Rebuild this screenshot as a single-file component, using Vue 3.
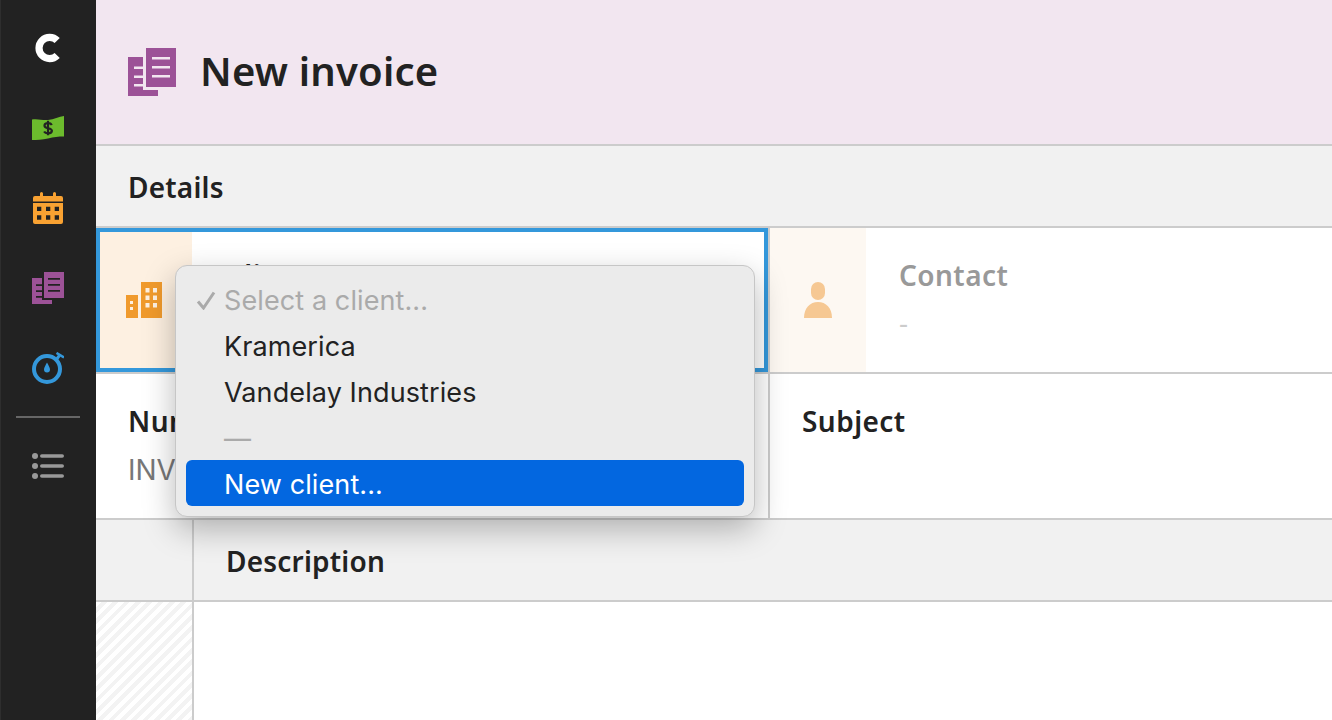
<template>
  <div class="app">
    <nav class="sidebar">
      <div class="nav-top">
        <svg class="logo" viewBox="0 0 26 30" width="26" height="30">
          <path d="M22.2 7.6A10.6 10.6 0 1 0 22.2 22.4" fill="none" stroke="#fff" stroke-width="7.2" />
        </svg>
      </div>
      <div class="nav-item">
        <svg viewBox="0 0 32 24" width="32" height="24">
          <path d="M0 3.500C6 2.500 10 4.500 16 4 22 3.500 27 .5 32 0V20.500C26 20.500 22 21 16 22.500 10 24 5 24 0 24Z" fill="#6cbb2d" />
          <path d="M19.800 9C19.200 7.800 18 7.200 16 7.200c-2 0-3.500.8-3.500 2.500 0 3.400 7.400 1.700 7.400 5.100 0 1.700-1.700 2.500-3.800 2.500-2 0-3.300-.6-4-1.900M16 4.800V19.200" fill="none" stroke="#222" stroke-width="2.200" />
        </svg>
      </div>
      <div class="nav-item">
        <svg viewBox="0 0 30 32" width="30" height="32">
          <path d="M7 4V1.500a1.500 1.500 0 0 1 3 0V4h10V1.500a1.500 1.500 0 0 1 3 0V4h5a2 2 0 0 1 2 2v3.500H0V6a2 2 0 0 1 2-2Z" fill="#f9a232" />
          <path fill-rule="evenodd" d="M0 11h30V30a2 2 0 0 1-2 2H2a2 2 0 0 1-2-2ZM4 14.700v4.300h4.300v-4.300Zm9 0v4.300h4.300v-4.300Zm8.700 0v4.300H26v-4.300ZM4 23.200v4.500h4.300v-4.500Zm9 0v4.500h4.300v-4.500Zm8.700 0v4.500H26v-4.500Z" fill="#f9a232" />
        </svg>
      </div>
      <div class="nav-item">
        <svg viewBox="0 0 48 48" width="32" height="32">
          <path fill-rule="evenodd" :d="backPage" fill="#9c5297" />
          <path fill-rule="evenodd" :d="frontPage" fill="#9c5297" />
        </svg>
      </div>
      <div class="nav-item">
        <svg viewBox="0 0 32 32" width="32" height="32">
          <circle cx="15" cy="17" r="13" fill="none" stroke="#3498db" stroke-width="4" />
          <path d="M24 8 27.500 3.500" fill="none" stroke="#3498db" stroke-width="3" />
          <path d="M24.500 1 32 5.500" fill="none" stroke="#3498db" stroke-width="2.600" />
          <path d="M15 10.500C13.500 13.500 12 15.500 12 17.500a3 3 0 0 0 6 0C18 15.500 16.500 13.500 15 10.500Z" fill="#3498db" />
        </svg>
      </div>
      <div class="nav-divider"></div>
      <div class="nav-item list-item">
        <svg viewBox="0 0 32 26" width="32" height="26">
          <g fill="#999">
            <circle cx="3" cy="3" r="3" />
            <circle cx="3" cy="13" r="3" />
            <circle cx="3" cy="23" r="3" />
            <rect x="8" y="1.200" width="24" height="3.600" rx="1.800" />
            <rect x="8" y="11.200" width="24" height="3.600" rx="1.800" />
            <rect x="8" y="21.200" width="24" height="3.600" rx="1.800" />
          </g>
        </svg>
      </div>
    </nav>

    <main class="content">
      <header class="page-header">
        <svg viewBox="0 0 48 48" width="48" height="48">
          <path fill-rule="evenodd" :d="backPage" fill="#9c5297" />
          <path fill-rule="evenodd" :d="frontPage" fill="#9c5297" />
        </svg>
        <h1>New invoice</h1>
      </header>

      <div class="section-title">Details</div>

      <div class="field-row">
        <div class="field active">
          <div class="field-icon client-icon">
            <svg viewBox="0 0 36 36" width="36" height="36">
              <path fill-rule="evenodd" d="M0 13h12v23H0ZM4 19v3h3v-3Zm0 6v3h3v-3Z" fill="#f09a2c" />
              <path fill-rule="evenodd" d="M15 0h21v36H15Zm4.500 6v4.500h4V6Zm7.500 0v4.500h4V6Zm-7.500 7.500V18h4v-4.500Zm7.500 0V18h4v-4.500ZM19.500 21v4.500h4V21Zm7.500 0v4.500h4V21Z" fill="#f09a2c" />
            </svg>
          </div>
          <div class="field-body">
            <div class="field-label">Client</div>
          </div>
        </div>
        <div class="field muted">
          <div class="field-icon contact-icon">
            <svg viewBox="0 0 28 36" width="28" height="36">
              <rect x="7" y="0" width="14" height="18" rx="7" fill="#f6c893" />
              <path d="M0 36C0 26 6 20 14 20S28 26 28 36Z" fill="#f6c893" />
            </svg>
          </div>
          <div class="field-body">
            <div class="field-label">Contact</div>
            <div class="field-dash">-</div>
          </div>
        </div>
      </div>

      <div class="field-row">
        <div class="field">
          <div class="field-body">
            <div class="field-label">Number</div>
            <div class="field-value">INV-0001</div>
          </div>
        </div>
        <div class="field">
          <div class="field-body">
            <div class="field-label">Subject</div>
          </div>
        </div>
      </div>

      <div class="table-head">
        <div class="gutter"></div>
        <div class="table-title">Description</div>
      </div>
      <div class="table-row">
        <div class="gutter hatch"></div>
        <div class="table-cell"></div>
      </div>

      <ul class="menu">
        <li v-for="item in menuItems" :key="item.label" :class="item.kind">
          <span class="check">
            <svg v-if="item.checked" viewBox="0 0 20 19" width="20" height="19">
              <path d="M2 10.500 7.500 17 18 1.500" fill="none" stroke="#aaa" stroke-width="3" />
            </svg>
          </span>
          {{ item.label }}
        </li>
      </ul>
    </main>
  </div>
</template>

<script setup>
const backPage =
  "M0 9H15V18.500H6V21H15V27.500H6V30H15V36H6V38.500H15V42H30V48H0Z";
const frontPage =
  "M18 0H48V39H18ZM24 9V11.500H42V9ZM24 18V20.500H42V18ZM24 27V29.500H42V27Z";

const menuItems = [
  { label: "Select a client...", kind: "disabled", checked: true },
  { label: "Kramerica", kind: "" },
  { label: "Vandelay Industries", kind: "" },
  { label: "—", kind: "separator" },
  { label: "New client...", kind: "selected" },
];
</script>

<style>
html,
body {
  margin: 0;
  height: 100%;
  overflow: hidden;
}
</style>

<style scoped>
.app {
  display: flex;
  height: 720px;
  font-family: "Noto Sans", sans-serif;
  color: #222;
  background: #fff;
}

.sidebar {
  width: 96px;
  flex: none;
  background: #222;
  box-shadow: inset 1px 0 0 #2e2e2e;
  display: flex;
  flex-direction: column;
  align-items: center;
}

.nav-top {
  height: 88px;
  box-sizing: border-box;
  padding-top: 7px;
  display: flex;
  align-items: center;
  justify-content: center;
}

.nav-item {
  height: 80px;
  display: flex;
  align-items: center;
  justify-content: center;
}

.nav-divider {
  width: 64px;
  height: 2px;
  background: #666;
  margin-top: 8px;
}

.list-item {
  height: 96px;
}

.content {
  position: relative;
  flex: 1;
  min-width: 0;
}

.page-header {
  height: 144px;
  padding-left: 32px;
  display: flex;
  align-items: center;
  gap: 24px;
  background: #f2e6f0;
  border-bottom: 2px solid #ccc;
}

h1 {
  margin: 0;
  padding-bottom: 4px;
  font-size: 40px;
  font-weight: 600;
  letter-spacing: 0.2px;
  color: #222;
}

.section-title {
  height: 82px;
  box-sizing: border-box;
  padding: 2px 0 0 32px;
  display: flex;
  align-items: center;
  background: #f1f1f1;
  border-bottom: 2px solid #ccc;
  font-size: 28px;
  font-weight: 600;
  letter-spacing: 0.2px;
}

.field-row {
  display: flex;
  height: 146px;
  box-sizing: border-box;
  border-bottom: 2px solid #ccc;
}

.field {
  display: flex;
  box-sizing: border-box;
  background: #fff;
}

.field:first-child {
  width: 672px;
  flex: none;
}

.field:last-child {
  flex: 1;
  border-left: 2px solid #ccc;
}

.field.active {
  border: 4px solid #3498db;
}

.field-icon {
  width: 96px;
  flex: none;
  display: flex;
  align-items: center;
  justify-content: center;
}

.client-icon {
  background: #fdf0e1;
  width: 92px;
  box-sizing: border-box;
  padding-right: 4px;
}

.contact-icon {
  background: #fdf8f2;
}

.field-body {
  padding: 25px 32px;
}

.active .field-body {
  padding-left: 34px;
  padding-top: 21px;
}

.muted .field-body {
  padding-left: 33px;
}

.muted .field-label {
  color: #999;
}

.field-label {
  font-size: 28px;
  font-weight: 600;
  line-height: 44px;
  letter-spacing: 0.45px;
}

.field-dash {
  color: #ccc;
  font-size: 28px;
  line-height: 40px;
  margin-top: 5px;
}

.field-value {
  color: #777;
  font-family: Inter, sans-serif;
  font-size: 28px;
  line-height: 40px;
  margin-top: 7px;
}

.table-head {
  display: flex;
  height: 82px;
  box-sizing: border-box;
  background: #f1f1f1;
  border-bottom: 2px solid #ccc;
}

.gutter {
  width: 96px;
  flex: none;
  border-right: 2px solid #ccc;
}

.table-title {
  padding: 2px 0 0 32px;
  display: flex;
  align-items: center;
  font-size: 28px;
  font-weight: 600;
  letter-spacing: 0.2px;
}

.table-row {
  display: flex;
  height: 118px;
}

.hatch {
  background: repeating-linear-gradient(135deg, #fff 0 4px, #f3f3f3 4px 8px);
}

/* native select popup, sits over the form */
.menu {
  position: absolute;
  left: 79px;
  top: 265px;
  width: 580px;
  height: 252px;
  box-sizing: border-box;
  margin: 0;
  padding: 10px 10px;
  list-style: none;
  background: #ebebeb;
  border: 1px solid #c6c6c6;
  border-radius: 12px;
  box-shadow: 0 12px 32px rgba(0, 0, 0, 0.28);
  font-family: Inter, sans-serif;
  font-size: 27px;
  letter-spacing: 0.1px;
  color: #222;
}

.menu li {
  height: 46px;
  box-sizing: border-box;
  padding-top: 2px;
  display: flex;
  align-items: center;
  border-radius: 6px;
}

.check {
  width: 38px;
  flex: none;
  padding-left: 10px;
  box-sizing: border-box;
  display: flex;
}

.menu .disabled {
  color: #aaa;
}

.menu .separator {
  color: #aaa;
}

.menu .selected {
  background: #0367e0;
  color: #fff;
}
</style>
